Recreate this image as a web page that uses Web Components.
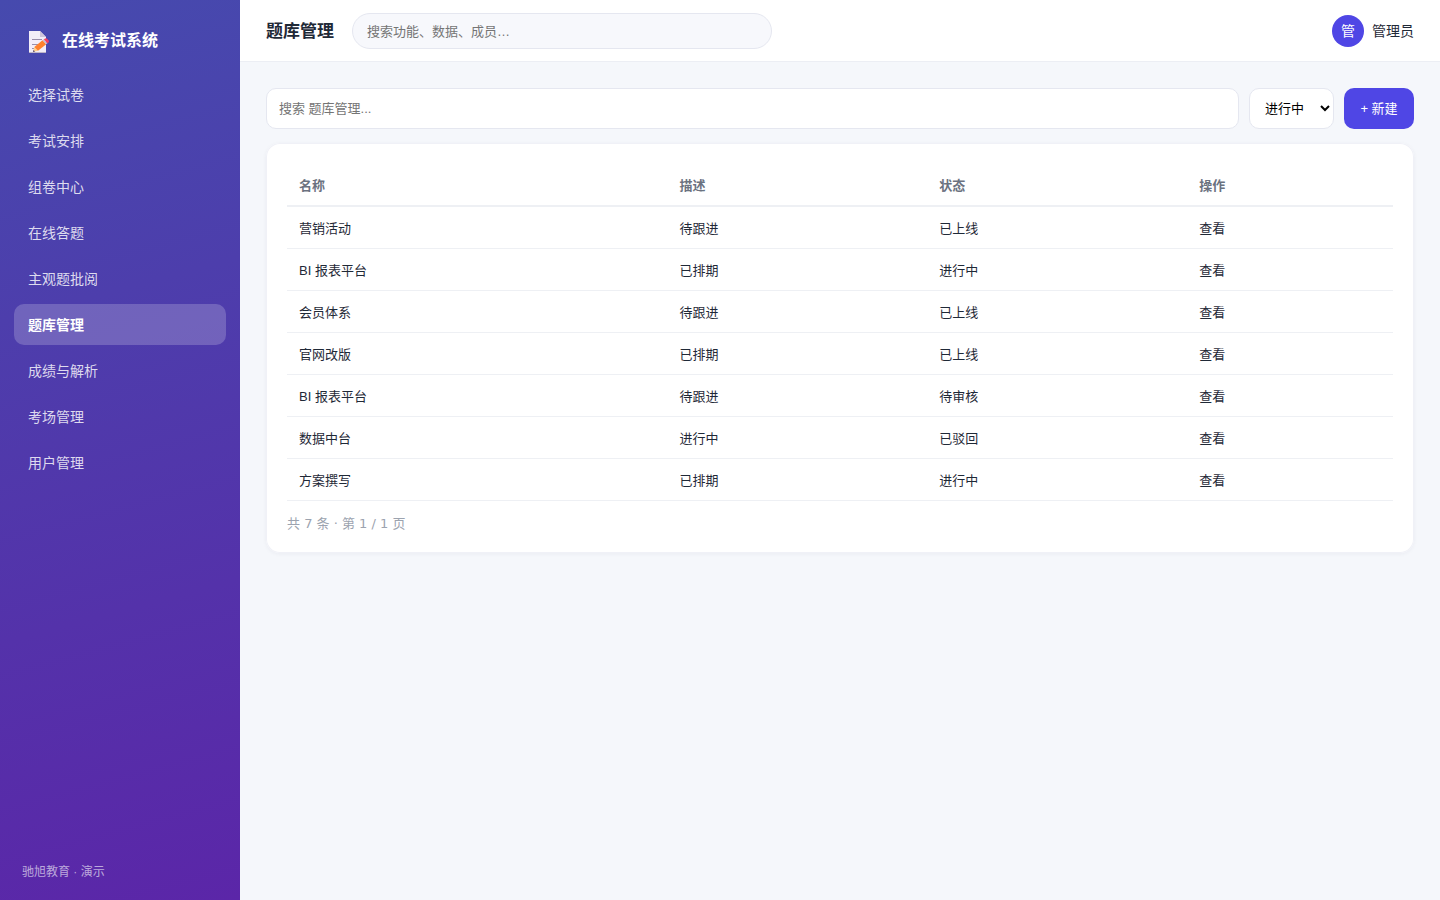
<!DOCTYPE html>
<html lang="zh-CN">
<head>
<meta charset="utf-8">
<meta name="viewport" content="width=device-width, initial-scale=1">
<title>题库管理 - 在线考试系统</title>
<style>
  body { --font: "Liberation Sans", "Noto Sans CJK SC", sans-serif; margin: 0; background: #f5f7fb; color: #1f2937; font: 14px/22px var(--font); }
</style>
</head>
<body>
<exam-app></exam-app>

<template id="t-app">
  <style>
    :host { display: flex; min-height: 100vh; }
    .main { flex: 1; min-width: 0; display: flex; flex-direction: column; }
    main { display: flex; flex-direction: column; gap: 14px; padding: 26px; }
  </style>
  <exam-sidebar>
    <span slot="title">在线考试系统</span>
    <nav-item>选择试卷</nav-item>
    <nav-item>考试安排</nav-item>
    <nav-item>组卷中心</nav-item>
    <nav-item>在线答题</nav-item>
    <nav-item>主观题批阅</nav-item>
    <nav-item active>题库管理</nav-item>
    <nav-item>成绩与解析</nav-item>
    <nav-item>考场管理</nav-item>
    <nav-item>用户管理</nav-item>
    <span slot="footer">驰旭教育 · 演示</span>
  </exam-sidebar>
  <div class="main">
    <top-bar>题库管理</top-bar>
    <main>
      <list-toolbar></list-toolbar>
      <record-table></record-table>
    </main>
  </div>
</template>

<template id="t-sidebar">
  <style>
    :host { display: flex; flex-direction: column; flex: none; width: 240px; box-sizing: border-box; padding: 22px 14px 18px; color: #fff; background: linear-gradient(165deg, #464aae, #5b26a8); }
    .brand { display: flex; align-items: center; gap: 12px; padding: 0 14px 14px; font-size: 16px; line-height: 38px; font-weight: 700; }
    svg { width: 22px; height: 22px; margin-top: 2px; }
    nav { display: flex; flex-direction: column; gap: 5px; }
    footer { margin-top: auto; padding: 0 8px; font-size: 12px; line-height: 20px; color: rgba(255,255,255,.6); }
  </style>
  <div class="brand">
    <svg viewBox="0 0 22 22" aria-hidden="true">
      <path d="M1 0h11l6 6v16H1z" fill="#f3eef8"/>
      <path d="M12 0l6 6h-6z" fill="#cdc4d8"/>
      <path d="M1 21h17v1H1z" fill="#bdb4c8"/>
      <path d="M4 8.500h10M4 13.500h6M4 17.500h3" stroke="#998eaa" stroke-width="1"/>
      <path d="M5 21l1.300-5 3.700 3.700z" fill="#ffd08a"/>
      <path d="M5 21l.5-2 1.500 1.400z" fill="#433b6b"/>
      <path d="M6.300 16L14.500 9.300l3.700 4L10 19.700z" fill="#ff822d"/>
      <path d="M14.500 9.300l1.300-1 3.700 4-1.300 1z" fill="#c9bdd5"/>
      <path d="M15.800 8.300l1.500-.9q1-.4 1.800.4l1.500 1.700q.8 1-.1 1.900l-1 .9z" fill="#f83f60"/>
    </svg>
    <slot name="title"></slot>
  </div>
  <nav aria-label="主导航"><slot></slot></nav>
  <footer><slot name="footer"></slot></footer>
</template>

<template id="t-nav-item">
  <style>
    :host { display: block; }
    a { display: block; padding: 10px 14px 9px; border-radius: 10px; color: rgba(255,255,255,.82); text-decoration: none; }
    :host([active]) a { color: #fff; font-weight: 700; background: rgba(255,255,255,.2); }
  </style>
  <a href="#"><slot></slot></a>
</template>

<template id="t-top-bar">
  <style>
    :host { display: block; background: #fff; border-bottom: 1px solid #eceef4; }
    header { display: flex; align-items: center; gap: 18px; padding: 13px 26px 12px; }
    h1 { margin: 0; padding-top: 2px; font-size: 17px; line-height: 24px; font-weight: 700; white-space: nowrap; }
    input { flex: 0 1 420px; min-width: 0; height: 36px; box-sizing: border-box; padding: 0 14px; border: 1px solid #e5e7f0; border-radius: 18px; background: #f7f8fc; font: 13px/20px var(--font); color: inherit; }
    input::placeholder { color: #757575; }
    .user { display: flex; align-items: center; gap: 8px; margin-left: auto; white-space: nowrap; }
    .avatar { display: grid; place-items: center; width: 32px; height: 32px; border-radius: 50%; background: #4f46e5; color: #fff; }
  </style>
  <header>
    <h1><slot></slot></h1>
    <input type="search" aria-label="全局搜索" placeholder="搜索功能、数据、成员…">
    <div class="user"><span class="avatar">管</span><span>管理员</span></div>
  </header>
</template>

<template id="t-toolbar">
  <style>
    :host { display: flex; gap: 10px; }
    input, select, button { height: 41px; box-sizing: border-box; border: 1px solid #e5e7f0; border-radius: 10px; background: #fff; font: 13px/20px var(--font); }
    input { flex: 1; min-width: 0; padding: 0 12px; }
    input::placeholder { color: #757575; }
    select { width: 85px; padding: 0 0 0 11px; color: #000; }
    button { width: 70px; padding: 0; border: 0; background: #4f46e5; color: #fff; white-space: nowrap; }
  </style>
  <input type="text" aria-label="搜索题库" placeholder="搜索 题库管理...">
  <select aria-label="状态"><option>进行中</option></select>
  <button type="button">+ 新建</button>
</template>

<template id="t-table">
  <style>
    :host { display: block; padding: 21px 21px 19px; border-radius: 14px; background: #fff; box-shadow: inset 0 0 0 1px #f0f1f7, 0 1px 4px rgba(30,41,80,.05); font-size: 13px; line-height: 21px; }
    table { width: 100%; border-collapse: separate; border-spacing: 0; table-layout: fixed; }
    th, td { box-sizing: border-box; padding: 11px 12px 9px; text-align: left; border-bottom: 1px solid #eef0f4; }
    th { color: #6b7280; font-weight: 600; border-bottom-width: 2px; }
    .name { width: 34.4%; }
    .mid { width: 23.5%; }
    p { margin: 12px 0 0; color: #9ca3af; font-family: "DejaVu Sans", "Noto Sans CJK SC", sans-serif; }
  </style>
  <table>
    <thead><tr>
      <th class="name" scope="col">名称</th><th class="mid" scope="col">描述</th><th class="mid" scope="col">状态</th><th scope="col">操作</th>
    </tr></thead>
    <tbody></tbody>
  </table>
  <p>共 7 条 · 第 1 / 1 页</p>
</template>

<script>
  class TemplateElement extends HTMLElement {
    constructor() {
      super();
      this.attachShadow({ mode: "open" })
        .append(document.getElementById(this.constructor.template).content.cloneNode(true));
    }
  }
  class NavItem extends TemplateElement {
    static template = "t-nav-item";
    connectedCallback() {
      if (this.hasAttribute("active")) this.shadowRoot.querySelector("a").setAttribute("aria-current", "page");
    }
  }
  class ExamSidebar extends TemplateElement { static template = "t-sidebar"; }
  class TopBar extends TemplateElement { static template = "t-top-bar"; }
  class ListToolbar extends TemplateElement { static template = "t-toolbar"; }
  class RecordTable extends TemplateElement {
    static template = "t-table";
    static records = [
      ["营销活动", "待跟进", "已上线"],
      ["BI 报表平台", "已排期", "进行中"],
      ["会员体系", "待跟进", "已上线"],
      ["官网改版", "已排期", "已上线"],
      ["BI 报表平台", "待跟进", "待审核"],
      ["数据中台", "进行中", "已驳回"],
      ["方案撰写", "已排期", "进行中"],
    ];
    connectedCallback() {
      const body = this.shadowRoot.querySelector("tbody");
      body.replaceChildren();
      for (const record of RecordTable.records) {
        const row = body.insertRow();
        for (const text of [...record, "查看"]) row.insertCell().textContent = text;
      }
    }
  }
  class ExamApp extends TemplateElement { static template = "t-app"; }
  customElements.define("nav-item", NavItem);
  customElements.define("exam-sidebar", ExamSidebar);
  customElements.define("top-bar", TopBar);
  customElements.define("list-toolbar", ListToolbar);
  customElements.define("record-table", RecordTable);
  customElements.define("exam-app", ExamApp);
</script>
</body>
</html>
